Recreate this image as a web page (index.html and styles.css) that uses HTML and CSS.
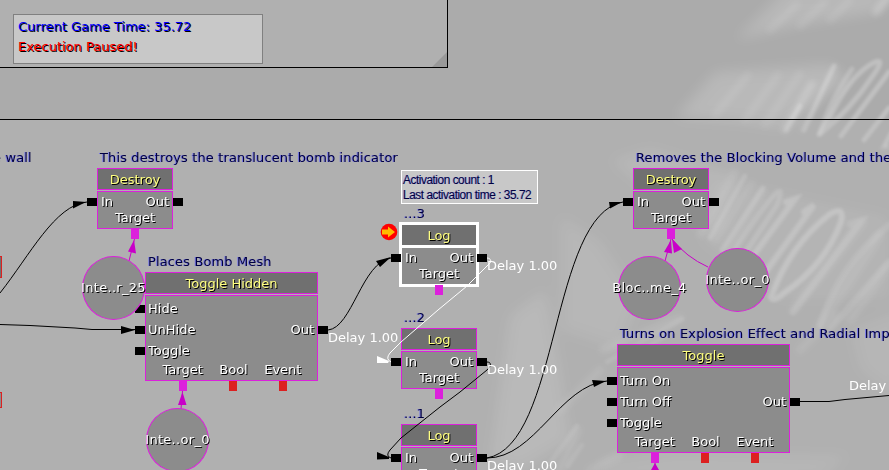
FILE: index.html
```html
<!DOCTYPE html>
<html lang="en">
<head>
<meta charset="utf-8">
<title>Sequence Debugger</title>
<link rel="stylesheet" href="styles.css">
</head>
<body>
<main class="canvas">
  <svg class="art" viewBox="0 0 889 470" aria-hidden="true">
    <defs>
      <filter id="soft" x="-20%" y="-20%" width="140%" height="140%"><feGaussianBlur stdDeviation="7"/></filter>
      <filter id="mid" x="-20%" y="-20%" width="140%" height="140%"><feGaussianBlur stdDeviation="3"/></filter>
      <filter id="fine" x="-20%" y="-20%" width="140%" height="140%"><feGaussianBlur stdDeviation="1.4"/></filter>
    </defs>
    <g fill="#fff" filter="url(#soft)">
      <path opacity=".17" d="M735 40L785-10H900L880 12 800 25z"/>
      <path opacity=".17" d="M675 118L715 72 830 64 850 80 780 128 740 122z"/>
      <path opacity=".12" d="M610 160L650 148 740 175 720 235 670 210z"/>
      <path opacity=".11" d="M560 215L600 240 640 300 620 350 560 330z"/>
      <path opacity=".15" d="M510 315L545 290 560 370 570 440 520 470 490 460z"/>
      <path opacity=".1" d="M850 330L900 310V400L860 370z"/>
      <path opacity=".1" d="M600 460L680 450 850 455 820 480H600z"/>
      <path opacity=".08" d="M720 180L890 215V300L780 300 700 240z"/>
    </g>
    <g fill="none" stroke="#fff" stroke-linecap="round" filter="url(#mid)">
      <path opacity=".11" stroke-width="7" d="M770 30L797 4M800 26L825 2M830 20L850 0M715 115L748 75M745 120L778 75M765 125L800 74"/>
      <path opacity=".25" stroke-width="7" d="M876 12L889-4M785 130L812 84"/>
      <path opacity=".14" stroke-width="6" d="M802 130L835 66M700 235L735 172M715 240L752 183M728 250L763 190"/>
      <path opacity=".13" stroke-width="8" d="M793 310L862 222M820 325L880 235M850 320L889 265M603 350L680 318M560 410L600 370M800 350L835 315M560 470L578 430M590 470L620 455"/>
    </g>
    <g fill="none" stroke="#fff" stroke-linecap="round" filter="url(#fine)">
      <path opacity=".2" stroke-width="5" d="M786 130L800 106M804 130L834 66M820 133Q828 105 852 69"/>
      <path opacity=".25" stroke-width="5" d="M820 134Q850 110 872 77 886 58 875 62 850 74 828 121 816 138 820 134"/>
      <path opacity=".27" stroke-width="5" d="M841 136L889 72M864 140L889 108M885 145L892 132"/>
      <path opacity=".18" stroke-width="5" d="M710 238L745 176M722 250L763 188M732 254Q760 210 777 192 784 187 777 205L742 258"/>
      <path opacity=".24" stroke-width="6" d="M753 256L795 199 786 202M767 270L814 205 804 212"/>
      <path opacity=".27" stroke-width="6" d="M771 297Q790 245 830 214 845 205 841 222 825 265 784 293 773 303 771 297"/>
      <path opacity=".13" stroke-width="7" d="M793 312L861 221 850 224M820 325Q840 265 889 225M831 328L889 262"/>
      <path opacity=".12" stroke-width="5" d="M607 362L682 319M625 360L665 336M577 426L548 466M582 445L568 466M882 148L889 147"/>
    </g>
  </svg>

  <div class="region region-lower"></div>
  <section class="region region-upper"><i class="grip"></i></section>
  <section class="status">
    <p class="time">Current Game Time: 35.72</p>
    <p class="paused">Execution Paused!</p>
  </section>

  <p class="caption caption-cut">e wall</p>
  <div class="stub stub-a"></div>
  <div class="stub stub-b"></div>

  <article class="node destroy-a">
    <p class="caption">This destroys the translucent bomb indicator</p>
    <h2>Destroy</h2>
    <div class="body">
      <div class="pins"><span class="in">In</span><span class="out">Out</span></div>
      <div class="vars"><span class="obj">Target</span></div>
    </div>
  </article>

  <article class="node wide hidden-toggle">
    <p class="caption">Places Bomb Mesh</p>
    <h2>Toggle Hidden</h2>
    <div class="body">
      <div class="pins">
        <div class="inputs"><span class="in">Hide</span><span class="in">UnHide</span><span class="in">Toggle</span></div>
        <span class="out">Out</span>
      </div>
      <div class="vars"><span class="obj">Target</span><span>Bool</span><span>Event</span></div>
    </div>
  </article>

  <article class="node selected log-a">
    <p class="caption log-caption">...3</p>
    <h2>Log</h2>
    <div class="body">
      <div class="pins"><span class="in">In</span><span class="out">Out</span></div>
      <div class="vars"><span class="obj">Target</span></div>
    </div>
  </article>
  <article class="node log-b">
    <p class="caption log-caption">...2</p>
    <h2>Log</h2>
    <div class="body">
      <div class="pins"><span class="in">In</span><span class="out">Out</span></div>
      <div class="vars"><span class="obj">Target</span></div>
    </div>
  </article>
  <article class="node log-c">
    <p class="caption log-caption">...1</p>
    <h2>Log</h2>
    <div class="body">
      <div class="pins"><span class="in">In</span><span class="out">Out</span></div>
      <div class="vars"><span class="obj">Target</span></div>
    </div>
  </article>

  <article class="node destroy-b">
    <p class="caption">Removes the Blocking Volume and the</p>
    <h2>Destroy</h2>
    <div class="body">
      <div class="pins"><span class="in">In</span><span class="out">Out</span></div>
      <div class="vars"><span class="obj">Target</span></div>
    </div>
  </article>

  <article class="node wide toggle">
    <p class="caption">Turns on Explosion Effect and Radial Imp</p>
    <h2>Toggle</h2>
    <div class="body">
      <div class="pins">
        <div class="inputs"><span class="in">Turn On</span><span class="in">Turn Off</span><span class="in">Toggle</span></div>
        <span class="out">Out</span>
      </div>
      <div class="vars"><span class="obj">Target</span><span>Bool</span><span>Event</span></div>
    </div>
  </article>

  <div class="tip"><p>Activation count : 1</p><p>Last activation time : 35.72</p></div>

  <svg class="wires" viewBox="0 0 889 470" aria-hidden="true">
    <g fill="none" stroke="#000">
      <path d="M0 293C30 255 55 205 87 202"/>
      <path d="M0 324.5L30 325.5 75 328 92 329.5H135"/>
      <path d="M328 330C352 328 362 262 391 258"/>
      <path d="M487 362C491 362 492 365 487 370L460 392 440 407 401 438 390 450Q385 456 391 458"/>
      <path d="M487 458C560 445 550 215 623 202"/>
      <path d="M487 458C535 458 560 385 607 381"/>
      <path d="M800 401.5H829L845 399.5 889 395.5"/>
    </g>
    <path fill="none" stroke="#fff" d="M487 258C491 258 492 262 489 264L483 270 467 286 438 310 401 342 390 353Q385 359 391 362"/>
    <path fill="#fff" d="M377 356L389 361 388 363 377 363z"/>
    <path d="M73 201L86 202 73 208.500zM121 326L135 330 121 334zM376 261L391 257 380 267zM377 452L389 457 389 459 377 459.500zM609 202L622 202 610 208.500zM592 380L606 381 594 387z"/>
    <g fill="none" stroke="#c800c8">
      <path d="M134.500 239L129 261M182.500 391L181 409M671 239L665 261M708 267Q686 257 672 239M655 463V470"/>
    </g>
    <path fill="#c800c8" d="M134 240L136 253.500 128 251.500zM182.500 392L186.500 405H178zM671 240L672 253.500 664 252zM672 239L682 249 674 253zM655 463L659 470V476H651V470z"/>
    <circle cx="389" cy="232" r="8.300" fill="#f00"/>
    <path fill="#fb0" d="M382 229.500H388V226.500L395 232 388 237.500V234.500H382z"/>
  </svg>

  <div class="var var-a">Inte..r_25</div>
  <div class="var var-b">Inte..or_0</div>
  <div class="var var-c">Bloc..me_4</div>
  <div class="var var-d">Inte..or_0</div>

  <span class="delay delay-a">Delay 1.00</span>
  <span class="delay delay-b">Delay 1.00</span>
  <span class="delay delay-c">Delay 1.00</span>
  <span class="delay delay-d">Delay 1.00</span>
  <span class="delay delay-e">Delay</span>
</main>
</body>
</html>
```
FILE: styles.css
```css
* { box-sizing: border-box; }
body {
  margin: 0;
  overflow: hidden;
  font: 13px/16px "DejaVu Sans", Verdana, sans-serif;
}
p, h2 { margin: 0; }

.canvas {
  position: relative;
  width: 889px;
  height: 470px;
  overflow: hidden;
  background: #ababab;
}
.art, .wires { position: absolute; inset: 0; width: 889px; height: 470px; }

/* comment regions */
.region { position: absolute; background: rgba(190, 190, 190, .25); }
.region-lower { left: 0; top: 119px; width: 889px; height: 351px; border-top: 1px solid #000; }
.region-upper { left: 0; top: 0; width: 448px; height: 68px; border: solid #000; border-width: 0 1px 1px 0; }
.grip {
  position: absolute;
  right: 0;
  bottom: 0;
  width: 15px;
  height: 15px;
  background: #999;
  clip-path: polygon(100% 0, 100% 100%, 0 100%);
}

.status {
  position: absolute;
  left: 13px;
  top: 14px;
  width: 250px;
  height: 50px;
  padding: 2px 4px;
  border: 1px solid #808080;
  background: #c8c8c8;
  line-height: 20px;
  text-shadow: 1px 1px #000;
}
.time { color: #00f; }
.paused { color: #f00; }

/* sequence nodes */
.node {
  --edge: #dc20dc;
  position: absolute;
  width: 76px;
  color: #fff;
  text-shadow: 1px 1px #000;
}
.wide { width: 173px; }
.node h2 {
  height: 22px;
  margin-bottom: 1px;
  padding-top: 3px;
  border: 1px solid var(--edge);
  background: #707070;
  color: #ffff80;
  font-size: 13px;
  font-weight: 400;
  line-height: 16px;
  text-align: center;
}
.body {
  display: flex;
  flex-direction: column;
  height: 38px;
  padding-top: 2px;
  border: 1px solid var(--edge);
  background: #8c8c8c;
}
.wide .body { height: 86px; padding-top: 5px; }
.selected { --edge: #fff; }
.selected h2, .selected .body { position: relative; box-shadow: 0 0 0 2px #fff; }

.pins { display: flex; justify-content: space-between; align-items: center; padding: 0 3px; }
.wide .pins { padding-left: 2px; }
.inputs { display: flex; flex-direction: column; gap: 5px; }
.in, .out, .vars span { position: relative; }
.in::before, .out::after, .vars span::after {
  content: "";
  position: absolute;
  background: #000;
}
.in::before { top: 4px; right: calc(100% + 4px); width: 10px; height: 8px; }
.wide .in::before { right: calc(100% + 3px); }
.out::after { top: 4px; left: calc(100% + 4px); width: 10px; height: 8px; }
.vars { display: flex; justify-content: center; gap: 16px; }
.wide .vars { gap: 16.5px; padding: 3px 0 0 1px; }
.vars span::after {
  top: 19px;
  left: calc(50% - 4px);
  width: 8px;
  height: 10px;
  background: #dc2020;
}
.vars .obj::after { background: #dc20dc; }

.caption {
  position: absolute;
  left: 3px;
  top: -18px;
  color: #000040;
  letter-spacing: .13px;
  white-space: nowrap;
  text-shadow: -1px 0 rgba(90, 90, 255, .65);
}
.caption-cut { left: -7px; top: 150px; }

.destroy-a { left: 97px; top: 168px; }
.hidden-toggle { left: 145px; top: 272px; }
.log-a { left: 401px; top: 224px; }
.log-b { left: 401px; top: 328px; }
.log-c { left: 401px; top: 424px; }
.destroy-b { left: 633px; top: 168px; }
.toggle { left: 617px; top: 344px; }

/* clipped neighbours at the left edge */
.stub { position: absolute; left: -10px; width: 12px; border: 1px solid #dc2020; background: #8c8c8c; }
.stub-a { top: 256px; height: 22px; background: #707070; }
.stub-b { top: 392px; height: 16px; }

.tip {
  position: absolute;
  left: 401px;
  top: 170px;
  width: 137px;
  height: 34px;
  padding: 2px 1px;
  border: 1px solid #fff;
  background: #c8c8c8;
  color: #000040;
  font: 12px/15px "Liberation Sans", Arial, sans-serif;
  letter-spacing: -.52px;
  white-space: nowrap;
  text-shadow: -1px 0 rgba(90, 90, 255, .45);
}

/* variables */
.var {
  position: absolute;
  display: flex;
  align-items: center;
  justify-content: center;
  width: 63px;
  height: 64px;
  border: 1px solid #dc20dc;
  border-radius: 50%;
  background: #8c8c8c;
  color: #fff;
  letter-spacing: .3px;
  white-space: nowrap;
  text-shadow: 1px 1px #000;
}
.var-a { left: 82px; top: 256px; }
.var-b { left: 146px; top: 408px; }
.var-c { left: 618px; top: 256px; }
.var-d { left: 706px; top: 248px; }

.delay { position: absolute; color: #fff; white-space: nowrap; }
.delay-a { left: 487px; top: 258px; }
.delay-b { left: 487px; top: 362px; }
.delay-c { left: 487px; top: 458px; }
.delay-d { left: 328px; top: 330px; }
.delay-e { left: 849px; top: 378px; }
```
